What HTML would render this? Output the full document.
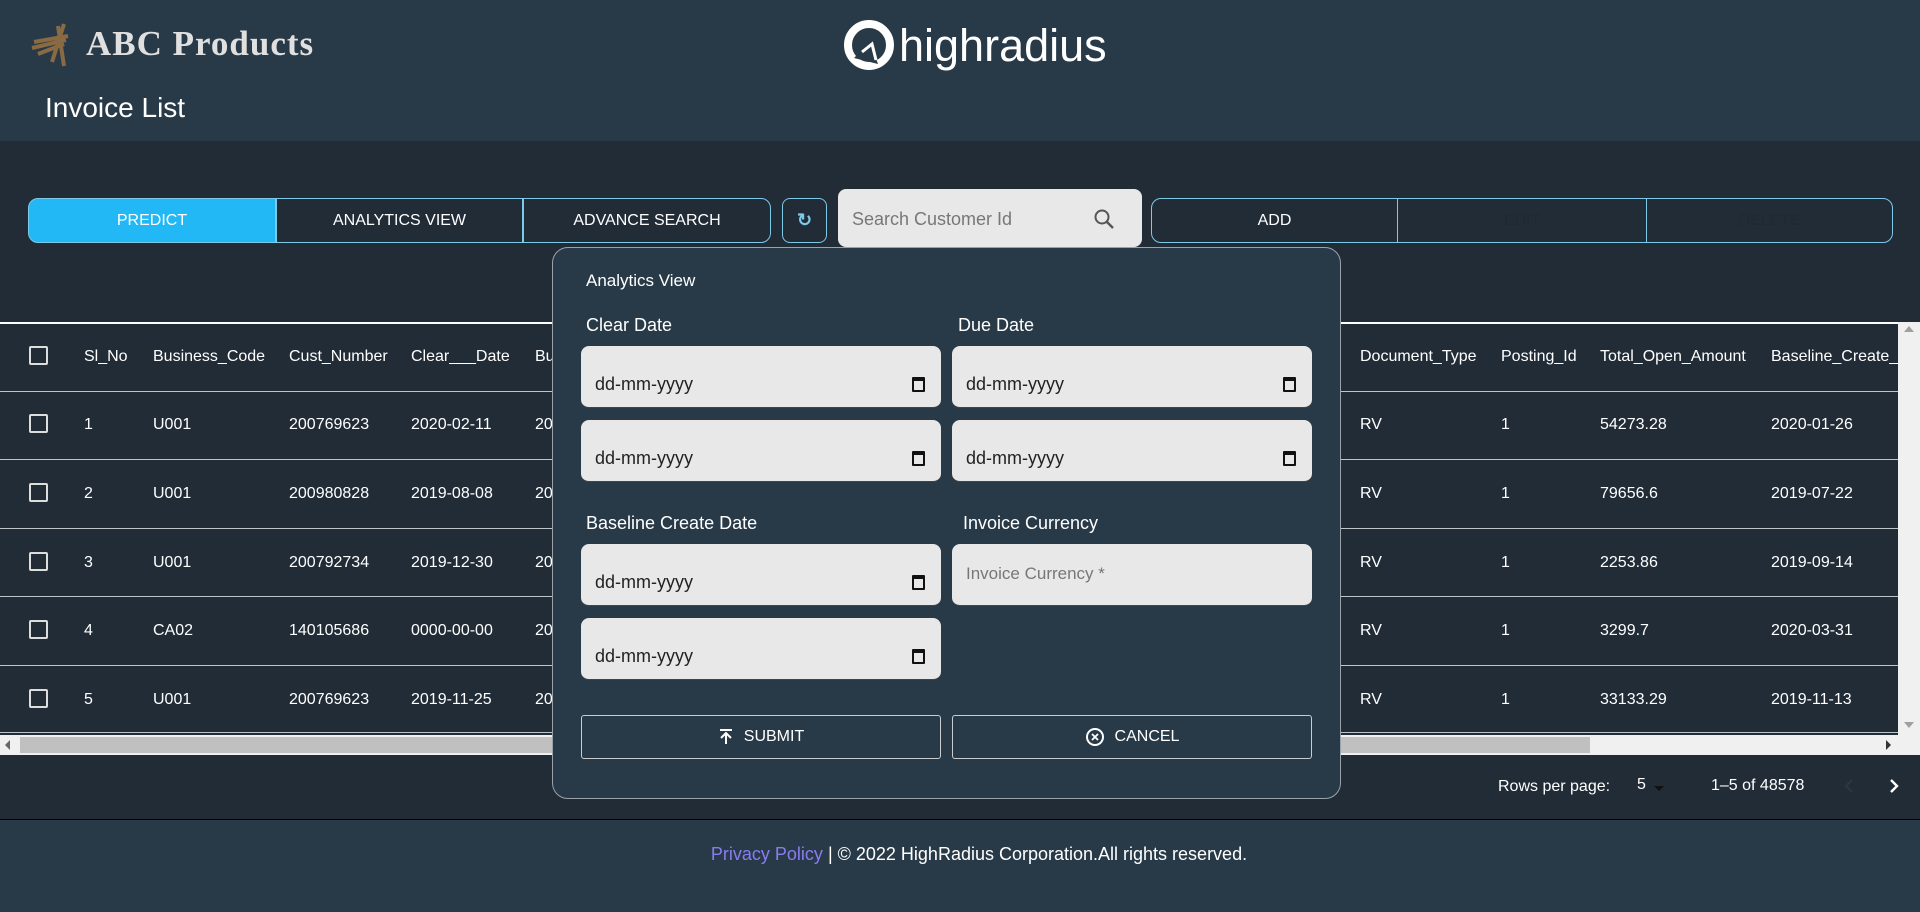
<!DOCTYPE html>
<html><head><meta charset="utf-8">
<style>
*{box-sizing:border-box;margin:0;padding:0}
body{width:1920px;height:912px;overflow:hidden;background:#212c37;font-family:"Liberation Sans",Arial,sans-serif;color:#fff;position:relative}
.a{position:absolute}
.hdr{left:0;top:0;width:1920px;height:141px;background:#283a48}
.btn{position:absolute;top:198px;height:45px;border:1px solid #7cc9e8;display:flex;align-items:center;justify-content:center;font-size:16px;color:#fff}
.cell{position:absolute;font-size:16px;color:#fff;white-space:nowrap}
.cb{position:absolute;width:19px;height:19px;border:2px solid #ddd;border-radius:2px}
.line{position:absolute;left:0;width:1898px;height:1px;background:#bfc4c8}
.inp{position:absolute;width:360px;height:62px;background:#e8e8e8;border-radius:8px;border-bottom:1px solid #444;color:#222;font-size:18px}
.inp span{position:absolute;left:14px;top:28px}
.cal{position:absolute;right:16px;top:31px;width:13px;height:15px;border:2px solid #111;border-top-width:4px;border-radius:1px}
.lab{position:absolute;font-size:18px;color:#fff}
.mb{position:absolute;top:715px;width:360px;height:44px;border:1px solid #ccc;border-radius:3px;display:flex;align-items:center;justify-content:center;font-size:16px;color:#fff;gap:10px}
</style></head><body>
<div class="a hdr"></div>
<svg class="a" style="left:28px;top:22px" width="54" height="46" viewBox="0 0 54 46">
<path d="M6 20 L40 14 M4 26 L38 18 M10 32 L36 22 M30 4 L36 44 M36 2 L24 40" stroke="#8a6a42" stroke-width="4" fill="none"/>
</svg>
<div class="a" style="left:86px;top:24px;font-family:'Liberation Serif',serif;font-weight:bold;font-size:35px;letter-spacing:1px;color:#e0e0e0">ABC Products</div>
<svg class="a" style="left:842px;top:18px" width="54" height="54" viewBox="0 0 54 54">
<circle cx="27" cy="27" r="21" fill="none" stroke="#fff" stroke-width="8"/>
<path d="M12 40 L28 24 L36 46 Z" fill="#283a48"/>
<path d="M20 34 L30 26 L34 42" fill="none" stroke="#fff" stroke-width="3"/>
</svg>
<div class="a" style="left:899px;top:20px;font-size:45px;color:#fff">highradius</div>
<div class="a" style="left:45px;top:92px;font-size:28px;color:#fff">Invoice List</div>

<div class="btn" style="left:28px;width:248px;background:#22b8f5;border-radius:10px 0 0 10px">PREDICT</div>
<div class="btn" style="left:276px;width:247px">ANALYTICS VIEW</div>
<div class="btn" style="left:523px;width:248px;border-radius:0 10px 10px 0">ADVANCE SEARCH</div>
<div class="btn" style="left:782px;width:45px;border-radius:8px;color:#7cc9e8;font-size:18px;font-weight:bold">↻</div>
<div class="a" style="left:838px;top:189px;width:304px;height:58px;background:#e8e8e8;border-radius:8px">
<span class="a" style="left:14px;top:20px;font-size:18px;color:#777">Search Customer Id</span>
<svg class="a" style="left:255px;top:19px" width="22" height="22" viewBox="0 0 22 22"><circle cx="9" cy="9" r="6.5" fill="none" stroke="#555" stroke-width="2"/><path d="M14 14 L20 20" stroke="#555" stroke-width="2.4"/></svg>
</div>
<div class="btn" style="left:1151px;width:247px;border-radius:10px 0 0 10px">ADD</div>
<div class="btn" style="left:1397px;width:250px;color:#1e2a33">EDIT</div>
<div class="btn" style="left:1646px;width:247px;border-radius:0 10px 10px 0;color:#1e2a33">DELETE</div>

<div class="a" style="left:0;top:322px;width:1898px;height:2px;background:#fff"></div>
<div class="line" style="top:391px"></div><div class="line" style="top:459px"></div><div class="line" style="top:528px"></div><div class="line" style="top:596px"></div><div class="line" style="top:665px"></div><div class="line" style="top:732px"></div>
<div class="a" style="left:1898px;top:322px;width:22px;height:433px;background:#f0f0f0"></div>
<div class="a" style="left:1904px;top:326px;width:0;height:0;border-left:5px solid transparent;border-right:5px solid transparent;border-bottom:6px solid #a0a0a0"></div>
<div class="a" style="left:1904px;top:722px;width:0;height:0;border-left:5px solid transparent;border-right:5px solid transparent;border-top:6px solid #a0a0a0"></div>
<div class="a" style="left:0;top:735px;width:1898px;height:20px;background:#f0f0f0"></div>
<div class="a" style="left:20px;top:737px;width:1570px;height:16px;background:#c0c0c0"></div>
<div class="a" style="left:5px;top:740px;border-top:5px solid transparent;border-bottom:5px solid transparent;border-right:5px solid #666"></div>
<div class="a" style="left:1886px;top:740px;border-top:5px solid transparent;border-bottom:5px solid transparent;border-left:5px solid #333"></div>

<div class="cb" style="left:29px;top:346px"></div>
<div class="cell" style="left:84px;top:348px">Sl_No</div>
<div class="cell" style="left:153px;top:348px">Business_Code</div>
<div class="cell" style="left:289px;top:348px">Cust_Number</div>
<div class="cell" style="left:411px;top:348px">Clear___Date</div>
<div class="cell" style="left:535px;top:348px">Bu</div>
<div class="cell" style="left:1360px;top:348px">Document_Type</div>
<div class="cell" style="left:1501px;top:348px">Posting_Id</div>
<div class="cell" style="left:1600px;top:348px">Total_Open_Amount</div>
<div class="cell" style="left:1771px;top:348px">Baseline_Create_</div>

<div class="cb" style="left:29px;top:414px"></div><div class="cell" style="left:84px;top:416px">1</div><div class="cell" style="left:153px;top:416px">U001</div><div class="cell" style="left:289px;top:416px">200769623</div><div class="cell" style="left:411px;top:416px">2020-02-11</div><div class="cell" style="left:535px;top:416px">20</div><div class="cell" style="left:1360px;top:416px">RV</div><div class="cell" style="left:1501px;top:416px">1</div><div class="cell" style="left:1600px;top:416px">54273.28</div><div class="cell" style="left:1771px;top:416px">2020-01-26</div>
<div class="cb" style="left:29px;top:483px"></div><div class="cell" style="left:84px;top:485px">2</div><div class="cell" style="left:153px;top:485px">U001</div><div class="cell" style="left:289px;top:485px">200980828</div><div class="cell" style="left:411px;top:485px">2019-08-08</div><div class="cell" style="left:535px;top:485px">20</div><div class="cell" style="left:1360px;top:485px">RV</div><div class="cell" style="left:1501px;top:485px">1</div><div class="cell" style="left:1600px;top:485px">79656.6</div><div class="cell" style="left:1771px;top:485px">2019-07-22</div>
<div class="cb" style="left:29px;top:552px"></div><div class="cell" style="left:84px;top:554px">3</div><div class="cell" style="left:153px;top:554px">U001</div><div class="cell" style="left:289px;top:554px">200792734</div><div class="cell" style="left:411px;top:554px">2019-12-30</div><div class="cell" style="left:535px;top:554px">20</div><div class="cell" style="left:1360px;top:554px">RV</div><div class="cell" style="left:1501px;top:554px">1</div><div class="cell" style="left:1600px;top:554px">2253.86</div><div class="cell" style="left:1771px;top:554px">2019-09-14</div>
<div class="cb" style="left:29px;top:620px"></div><div class="cell" style="left:84px;top:622px">4</div><div class="cell" style="left:153px;top:622px">CA02</div><div class="cell" style="left:289px;top:622px">140105686</div><div class="cell" style="left:411px;top:622px">0000-00-00</div><div class="cell" style="left:535px;top:622px">20</div><div class="cell" style="left:1360px;top:622px">RV</div><div class="cell" style="left:1501px;top:622px">1</div><div class="cell" style="left:1600px;top:622px">3299.7</div><div class="cell" style="left:1771px;top:622px">2020-03-31</div>
<div class="cb" style="left:29px;top:689px"></div><div class="cell" style="left:84px;top:691px">5</div><div class="cell" style="left:153px;top:691px">U001</div><div class="cell" style="left:289px;top:691px">200769623</div><div class="cell" style="left:411px;top:691px">2019-11-25</div><div class="cell" style="left:535px;top:691px">20</div><div class="cell" style="left:1360px;top:691px">RV</div><div class="cell" style="left:1501px;top:691px">1</div><div class="cell" style="left:1600px;top:691px">33133.29</div><div class="cell" style="left:1771px;top:691px">2019-11-13</div>

<div class="cell" style="left:1498px;top:778px;font-size:16px">Rows per page:</div>
<div class="cell" style="left:1637px;top:776px;font-size:16px">5</div>
<div class="a" style="left:1654px;top:786px;border-left:5px solid transparent;border-right:5px solid transparent;border-top:5px solid #111"></div>
<div class="cell" style="left:1711px;top:777px;font-size:16px">1–5 of 48578</div>
<svg class="a" style="left:1842px;top:778px" width="14" height="16" viewBox="0 0 14 16"><path d="M10 2 L4 8 L10 14" stroke="#2a3640" stroke-width="2.4" fill="none"/></svg>
<svg class="a" style="left:1887px;top:778px" width="14" height="16" viewBox="0 0 14 16"><path d="M4 2 L10 8 L4 14" stroke="#fff" stroke-width="2.4" fill="none"/></svg>

<div class="a" style="left:0;top:819px;width:1920px;height:93px;background:#283a48;border-top:1px solid #000"></div>
<div class="a" style="left:0;top:844px;width:1958px;text-align:center;font-size:18px;color:#fff"><span style="color:#8a7cf0">Privacy Policy</span> | © 2022 HighRadius Corporation.All rights reserved.</div>

<div class="a" style="left:552px;top:247px;width:789px;height:552px;background:#283a48;border:1px solid #9aa3ab;border-radius:16px"></div>
<div class="lab" style="left:586px;top:271px;font-size:17px">Analytics View</div>
<div class="lab" style="left:586px;top:315px">Clear Date</div>
<div class="lab" style="left:958px;top:315px">Due Date</div>
<div class="inp" style="left:581px;top:346px"><span>dd-mm-yyyy</span><i class="cal"></i></div>
<div class="inp" style="left:952px;top:346px"><span>dd-mm-yyyy</span><i class="cal"></i></div>
<div class="inp" style="left:581px;top:420px"><span>dd-mm-yyyy</span><i class="cal"></i></div>
<div class="inp" style="left:952px;top:420px"><span>dd-mm-yyyy</span><i class="cal"></i></div>
<div class="lab" style="left:586px;top:513px">Baseline Create Date</div>
<div class="lab" style="left:963px;top:513px">Invoice Currency</div>
<div class="inp" style="left:581px;top:544px"><span>dd-mm-yyyy</span><i class="cal"></i></div>
<div class="inp" style="left:952px;top:544px"><span style="top:20px;color:#777;font-size:17px">Invoice Currency *</span></div>
<div class="inp" style="left:581px;top:618px"><span>dd-mm-yyyy</span><i class="cal"></i></div>
<div class="mb" style="left:581px"><svg width="16" height="18" viewBox="0 0 16 18"><path d="M2 2 H14 M8 16 V6 M3 10 L8 5 L13 10" stroke="#fff" stroke-width="2" fill="none"/></svg>SUBMIT</div>
<div class="mb" style="left:952px"><svg width="20" height="20" viewBox="0 0 20 20"><circle cx="10" cy="10" r="8" stroke="#fff" stroke-width="2" fill="none"/><path d="M7 7 L13 13 M13 7 L7 13" stroke="#fff" stroke-width="1.8"/></svg>CANCEL</div>
</body></html>
